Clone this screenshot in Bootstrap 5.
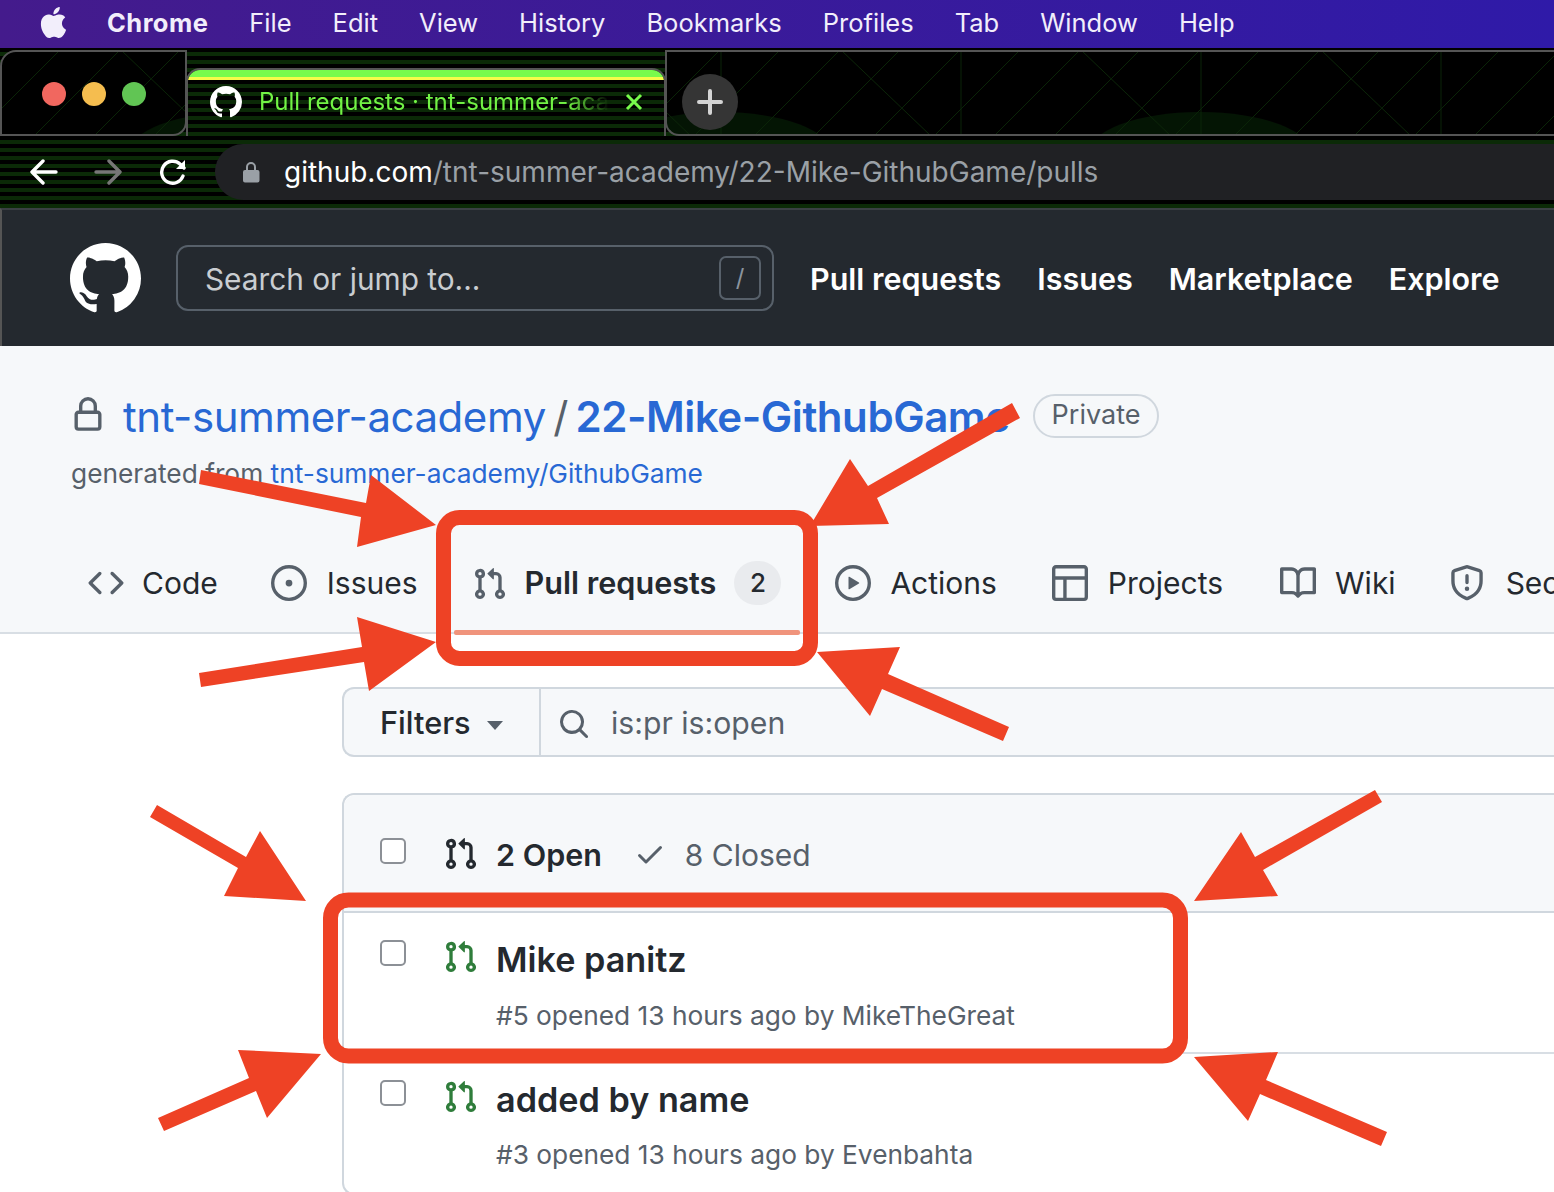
<!DOCTYPE html>
<html lang="en">
<head>
<meta charset="utf-8">
<title>Pull requests</title>
<link href="https://cdn.jsdelivr.net/npm/bootstrap@5.3.0/dist/css/bootstrap.min.css" rel="stylesheet">
<style>
html,body{margin:0;background:#fff}
body{width:1554px;height:1192px;overflow:hidden;position:relative;font-family:Inter,"Liberation Sans",sans-serif;color:#24292f}
a{text-decoration:none}
svg{display:block;flex:none}
.defs-holder{position:absolute}
.mac-strip{height:48px;background:linear-gradient(90deg,#441b8c,#2f1aa8);color:#f2eefb;padding:0 0 3px 38px;font-size:25.5px;line-height:45px;gap:41px}
.mac-strip .apple{width:31px;height:31px;margin-right:-3px;fill:#f2eefb}
.mac-strip b{font-weight:700;letter-spacing:.45px}
.browser{height:160px;background:repeating-linear-gradient(180deg,#000 0 4px,#0b2a07 4px 8px) fixed}
.top-row{height:88px}
.scene{margin-top:2px;height:86px;background-color:#000;background-image:url("data:image/svg+xml,%3Csvg xmlns='http://www.w3.org/2000/svg' width='480' height='86'%3E%3Cellipse cx='240' cy='104' rx='112' ry='42' fill='%23041504'/%3E%3Cellipse cx='720' cy='104' rx='112' ry='42' fill='%23041504'/%3E%3Cg stroke='%230a2407' fill='none'%3E%3Cpath d='M60 0L-26 86M120 0L34 86M180 0L94 86M240 0L154 86M300 0L214 86M360 0L274 86M420 0L334 86M480 0L394 86M540 0L454 86M1 0V86M241 0V86M121 0L211 86M361 0L451 86'/%3E%3C/g%3E%3C/svg%3E");background-origin:border-box;border:solid #555}
.scene-left{width:187px;border-width:2px;border-radius:16px 0 14px 0;flex:none}
.dots{gap:16px;padding:30px 0 0 40px}
.dots span{width:24px;height:24px;border-radius:50%}
.dot-r{background:#f1675f}.dot-y{background:#f5bd4f}.dot-g{background:#61c554}
.page-tab{width:480px;flex:none;margin:20px -1px 0;height:68px;border:2px solid #555;border-bottom:0;border-radius:14px 14px 0 0;overflow:hidden;background:repeating-linear-gradient(180deg,#000 0 4px,#0b2a07 4px 8px) fixed}
.tab-band{height:10px;background:linear-gradient(180deg,#78fb4c 0 7px,#f6fb4a 7px)}
.tab-body{padding:6px 18px 0 22px;color:#72f345;font-size:24px;line-height:32px}
.tab-mark{color:#fff}
.tab-title{width:350px;white-space:nowrap;overflow:hidden;margin-left:17px;-webkit-mask-image:linear-gradient(90deg,#000 88%,transparent);mask-image:linear-gradient(90deg,#000 88%,transparent)}
.tab-x{stroke:#78fb4c;stroke-width:3;margin-left:16px}
.scene-right{flex:1;border-width:2px 0 2px 2px;border-radius:0 0 0 14px;background-position:-665px 0}
.plus-btn{width:56px;height:56px;border-radius:50%;background:#353535;margin:22px 0 0 15px}
.tool-row{height:72px;padding:8px 0 8px 30px}
.nav-ico{stroke-width:3.4;fill:none;stroke-linecap:round;stroke-linejoin:round}
.ico-fwd{margin-left:36px}.ico-rel{margin-left:37px}
.omnibox{height:56px;flex:1;margin-left:28px;background:#202124;border-radius:28px 0 0 28px;padding-left:27px;font-size:28px;color:#9aa0a6}
.omnibox svg{margin-right:24px}
.omnibox b{font-weight:400;color:#fff}
.gh-head{height:138px;background:#24292f;border-left:2px solid #555;border-top:2px solid #3a3f44;padding-left:68px;color:#fff}
.jump{width:598px;height:66px;margin-left:35px;border:2px solid #57606a;border-radius:12px;padding:2px 11px 0 27px;font-size:29.8px;color:#c9cdd1}
.slash{width:42px;height:44px;margin-top:-2px;border:2px solid #57606a;border-radius:7px;font-size:24px;color:#8b949e}
.gh-links{gap:36px;margin-left:36px;padding-top:2px;font-size:30.5px;font-weight:600}
.repo-top{height:288px;background:#f6f8fa;border-bottom:2px solid #d8dee4;overflow:hidden}
.repo-title{padding:43px 0 0 70px;height:98px;font-size:42px;line-height:48px;letter-spacing:-.45px}
.repo-title a{color:#2868d4}
.repo-lock{margin:-4px 17px 0 0}
.sep{color:#57606a;margin:0 7.5px}
.priv{height:44px;border:2px solid #d0d7de;border-radius:22px;padding:0 17px;font-size:27px;letter-spacing:0;color:#57606a;margin:-2px 0 0 23px;line-height:38px}
.from{padding-left:71px;font-size:26.3px;line-height:30px;color:#57606a;margin-top:15px}
.from a{color:#2868d4}
.tabs-line{padding-left:88px;margin-top:72px;font-size:30px;white-space:nowrap;line-height:40px}
.tabs-line .ico{fill:#57606a}
.t-code{gap:18px;margin-right:53px}
.t-issues{gap:20px;margin-right:54px}
.t-pr{margin-left:3px;margin-right:54px;font-size:30.6px}
.t-pr b{font-weight:600;margin-left:20px}
.t-actions{gap:19px;margin-right:55px}
.t-projects{gap:20px;margin-right:57px}
.t-wiki{gap:19px;margin-right:53px}
.t-sec{gap:21px}
.counter{width:47px;height:44px;margin-left:18px;border-radius:22px;background:#e9ebee;font-size:26px;font-weight:500;text-align:center;line-height:44px}
.filter-bar{height:70px;margin:53px 0 0 342px;border:2px solid #d0d7de;border-right:0;border-radius:12px 0 0 12px;background:#f6f8fa}
.filt{width:197px;border-right:2px solid #d0d7de;padding:3px 0 0 36px;font-size:30.7px;font-weight:500}
.caret-mark{width:0;height:0;border:8px solid transparent;border-top:9px solid #57606a;border-bottom:0;margin-left:16px;margin-top:3px}
.q{padding:3px 0 0 17px;gap:21px;font-size:30.2px;color:#57606a}
.pr-list{margin:36px 0 0 342px;border:2px solid #d0d7de;border-right:0;border-radius:12px 0 0 12px;height:402px}
.pr-head{height:118px;background:#f6f8fa;border-bottom:2px solid #d0d7de;border-radius:12px 0 0 0;padding-left:36px;font-size:30.5px}
.head-txt{margin:4px 0 0 20px}
.head-cb{margin-bottom:4px}
.head-pr{margin-left:40px;fill:#24292f}
.head-chk{margin:2px 0 0 32px;fill:#57606a}
.head-closed{margin-left:19px;color:#57606a;font-size:30px}
.cb{width:26px;height:26px;border:2px solid #8c9096;border-radius:5px;background:#fff;flex:none}
.pr-row{padding-left:36px;border-bottom:2px solid #d8dee4;height:141px}
.pr-row .cb{margin-top:27px}
.pr-row .pi{margin:28px 0 0 40px;fill:#2f7d3b}
.pr-body{margin-left:20px}
.pr-body h3{font-size:34.2px;font-weight:600;line-height:40px;margin:27px 0 0}
.pr-body p{font-size:26.3px;line-height:32px;margin:20px 0 0;color:#57606a}
.pr-row.last .cb{margin-top:26px}
.pr-row.last .pi{margin-top:27px}
.pr-row.last h3{margin-top:26px}
.pr-row.last p{margin-top:19px}
.notes{position:absolute;left:0;top:0;pointer-events:none}
</style>
</head>
<body>
<svg class="defs-holder" width="0" height="0">
<defs>
<symbol id="mark" viewBox="0 0 16 16"><path fill="currentColor" d="M8 0C3.58 0 0 3.58 0 8c0 3.54 2.29 6.53 5.47 7.59.4.07.55-.17.55-.38 0-.19-.01-.82-.01-1.49-2.01.37-2.53-.49-2.69-.94-.09-.23-.48-.94-.82-1.13-.28-.15-.68-.52-.01-.53.63-.01 1.08.58 1.23.82.72 1.21 1.87.87 2.33.66.07-.52.28-.87.51-1.07-1.78-.2-3.64-.89-3.64-3.95 0-.87.31-1.59.82-2.15-.08-.2-.36-1.02.08-2.12 0 0 .67-.21 2.2.82.64-.18 1.32-.27 2-.27.68 0 1.36.09 2 .27 1.53-1.04 2.2-.82 2.2-.82.44 1.1.16 1.92.08 2.12.51.56.82 1.27.82 2.15 0 3.07-1.87 3.75-3.65 3.95.29.25.54.73.54 1.48 0 1.07-.01 1.93-.01 2.2 0 .21.15.46.55.38A8.013 8.013 0 0016 8c0-4.42-3.58-8-8-8z"/></symbol>
<symbol id="prq" viewBox="1.5 .6 13.5 14.4" preserveAspectRatio="none"><path d="M1.5 3.25a2.25 2.25 0 1 1 3 2.122v5.256a2.251 2.251 0 1 1-1.5 0V5.372A2.25 2.25 0 0 1 1.5 3.25Zm5.677-.177L9.573.677A.25.25 0 0 1 10 .854V2.5h1A2.5 2.5 0 0 1 13.5 5v5.628a2.251 2.251 0 1 1-1.5 0V5a1 1 0 0 0-1-1h-1v1.646a.25.25 0 0 1-.427.177L7.177 3.427a.25.25 0 0 1 0-.354ZM3.75 2.5a.75.75 0 1 0 0 1.5.75.75 0 0 0 0-1.5Zm0 9.5a.75.75 0 1 0 0 1.5.75.75 0 0 0 0-1.5Zm8.25.75a.75.75 0 1 0 1.5 0 .75.75 0 0 0-1.5 0Z"/></symbol>
</defs>
</svg>

<div class="mac-strip d-flex align-items-center">
  <svg class="apple" viewBox="0 0 16 16"><path d="M11.182.008C11.148-.03 9.923.023 8.857 1.18c-1.066 1.156-.902 2.482-.878 2.516.024.034 1.52.087 2.475-1.258.955-1.345.762-2.391.728-2.43Zm3.314 11.733c-.048-.096-2.325-1.234-2.113-3.422.212-2.189 1.675-2.789 1.698-2.854.023-.065-.597-.79-1.254-1.157a3.692 3.692 0 0 0-1.563-.434c-.108-.003-.483-.095-1.254.116-.508.139-1.653.589-1.968.607-.316.018-1.256-.522-2.267-.665-.647-.125-1.333.131-1.824.328-.49.196-1.422.754-2.074 2.237-.652 1.482-.311 3.83-.067 4.56.244.729.625 1.924 1.273 2.796.576.984 1.34 1.667 1.659 1.899.319.232 1.219.386 1.843.067.502-.308 1.408-.485 1.766-.472.357.013 1.061.154 1.782.539.571.197 1.111.115 1.652-.105.541-.221 1.324-1.059 2.238-2.758.347-.79.505-1.217.473-1.282Z"/></svg>
  <b>Chrome</b><span>File</span><span>Edit</span><span>View</span><span>History</span><span>Bookmarks</span><span>Profiles</span><span>Tab</span><span>Window</span><span>Help</span>
</div>

<div class="browser">
  <div class="top-row d-flex">
    <div class="scene scene-left dots d-flex">
      <span class="dot-r"></span><span class="dot-y"></span><span class="dot-g"></span>
    </div>
    <div class="page-tab">
      <div class="tab-band"></div>
      <div class="tab-body d-flex align-items-center">
        <svg class="tab-mark" width="32" height="32"><use href="#mark"/></svg>
        <div class="tab-title">Pull requests · tnt-summer-academy/22-Mike</div>
        <svg class="tab-x" width="18" height="18" viewBox="0 0 18 18"><path d="M2 2L16 16M16 2L2 16"/></svg>
      </div>
    </div>
    <div class="scene scene-right">
      <div class="plus-btn d-flex align-items-center justify-content-center">
        <svg width="26" height="26" viewBox="0 0 26 26"><path d="M13 2V24M2 13H24" stroke="#d4d4d4" stroke-width="4" stroke-linecap="round"/></svg>
      </div>
    </div>
  </div>
  <div class="tool-row d-flex align-items-center">
    <svg class="nav-ico" width="28" height="26" viewBox="0 0 28 26" stroke="#fff"><path d="M26 13H3M13 2L2 13L13 24"/></svg>
    <svg class="nav-ico ico-fwd" width="28" height="26" viewBox="0 0 28 26" stroke="#777"><path d="M2 13H25M15 2L26 13L15 24"/></svg>
    <svg class="nav-ico ico-rel" width="28" height="28" viewBox="0 0 28 28" stroke="#fff"><path d="M24 18A11 11 0 1 1 21 6L25 10"/><path d="M26 2V11H17Z" fill="#fff" stroke="none"/></svg>
    <div class="omnibox d-flex align-items-center">
      <svg width="18" height="22" viewBox="0 0 18 22"><path fill="#9aa0a6" d="M4 9V6a5 5 0 0 1 10 0v3h1.500a2 2 0 0 1 2 2v8.500a2 2 0 0 1-2 2h-12.500a2 2 0 0 1-2-2V11a2 2 0 0 1 2-2zm2 0h6V6a3 3 0 0 0-6 0z"/></svg>
      <span><b>github.com</b>/tnt-summer-academy/22-Mike-GithubGame/pulls</span>
    </div>
  </div>
</div>

<div class="gh-head d-flex align-items-center">
  <svg width="71" height="71"><use href="#mark"/></svg>
  <div class="jump d-flex align-items-center justify-content-between">
    <span>Search or jump to...</span>
    <span class="slash d-flex align-items-center justify-content-center">/</span>
  </div>
  <div class="gh-links d-flex"><span>Pull requests</span><span>Issues</span><span>Marketplace</span><span>Explore</span></div>
</div>

<div class="repo-top">
  <div class="repo-title d-flex align-items-center">
    <svg class="repo-lock" width="36" height="36" viewBox="0 0 16 16" fill="#57606a"><path d="M4 4a4 4 0 0 1 8 0v2h.25c.966 0 1.750.784 1.750 1.750v5.500A1.750 1.750 0 0 1 12.250 15h-8.500A1.750 1.750 0 0 1 2 13.250v-5.500C2 6.784 2.784 6 3.750 6H4Zm8.250 3.500h-8.500a.25.25 0 0 0-.25.25v5.500c0 .138.112.25.25.25h8.500a.25.25 0 0 0 .25-.25v-5.500a.25.25 0 0 0-.25-.25ZM10.500 6V4a2.500 2.500 0 1 0-5 0v2Z"/></svg>
    <a href="#">tnt-summer-academy</a><span class="sep">/</span><a href="#" class="fw-semibold">22-Mike-GithubGame</a>
    <span class="priv">Private</span>
  </div>
  <div class="from">generated from <a href="#">tnt-summer-academy/GithubGame</a></div>
  <div class="tabs-line d-flex align-items-center">
    <div class="t-code d-flex align-items-center"><svg class="ico" width="36" height="36" viewBox="0 0 16 16"><path d="m11.28 3.22 4.25 4.25a.75.75 0 0 1 0 1.06l-4.25 4.25a.749.749 0 0 1-1.275-.326.749.749 0 0 1 .215-.734L13.94 8l-3.72-3.72a.749.749 0 0 1 .326-1.275.749.749 0 0 1 .734.215Zm-6.56 0a.751.751 0 0 1 1.042.018.751.751 0 0 1 .018 1.042L2.06 8l3.72 3.72a.749.749 0 0 1-.326 1.275.749.749 0 0 1-.734-.215L.47 8.53a.75.75 0 0 1 0-1.06Z"/></svg>Code</div>
    <div class="t-issues d-flex align-items-center"><svg class="ico" width="36" height="36" viewBox="0 0 16 16"><path d="M8 9.500a1.500 1.500 0 1 0 0-3 1.500 1.500 0 0 0 0 3Z"/><path d="M8 0a8 8 0 1 1 0 16A8 8 0 0 1 8 0ZM1.500 8a6.500 6.500 0 1 0 13 0 6.500 6.500 0 0 0-13 0Z"/></svg>Issues</div>
    <div class="t-pr d-flex align-items-center"><svg class="ico" width="30" height="31"><use href="#prq"/></svg><b>Pull requests</b><span class="counter">2</span></div>
    <div class="t-actions d-flex align-items-center"><svg class="ico" width="36" height="36" viewBox="0 0 16 16"><path d="M8 0a8 8 0 1 1 0 16A8 8 0 0 1 8 0ZM1.500 8a6.500 6.500 0 1 0 13 0 6.500 6.500 0 0 0-13 0Zm4.879-2.773 4.264 2.559a.25.25 0 0 1 0 .428l-4.264 2.559A.25.25 0 0 1 6 10.559V5.442a.25.25 0 0 1 .379-.215Z"/></svg>Actions</div>
    <div class="t-projects d-flex align-items-center"><svg class="ico" width="36" height="36" viewBox="0 0 16 16"><path d="M0 1.750C0 .784.784 0 1.750 0h12.500C15.216 0 16 .784 16 1.750v12.500A1.750 1.750 0 0 1 14.250 16H1.750A1.750 1.750 0 0 1 0 14.250ZM6.500 6.500v8h7.750a.25.25 0 0 0 .25-.25V6.500Zm8-1.500V1.750a.25.25 0 0 0-.25-.25H1.750a.25.25 0 0 0-.25.25V5Zm-13 1.500v7.750c0 .138.112.25.25.25H5v-8Z"/></svg>Projects</div>
    <div class="t-wiki d-flex align-items-center"><svg class="ico" width="36" height="36" viewBox="0 0 16 16"><path d="M0 1.750A.75.75 0 0 1 .75 1h4.253c1.227 0 2.317.59 3 1.501A3.743 3.743 0 0 1 11.006 1h4.245a.75.75 0 0 1 .75.75v10.500a.75.75 0 0 1-.75.75h-4.507a2.250 2.250 0 0 0-1.591.659l-.622.621a.75.75 0 0 1-1.060 0l-.622-.621A2.250 2.250 0 0 0 5.258 13H.75a.75.75 0 0 1-.75-.75Zm7.251 10.324.004-5.073-.002-2.253A2.250 2.250 0 0 0 5.003 2.500H1.500v9h3.757a3.750 3.750 0 0 1 1.994.574ZM8.755 4.750l-.004 7.322a3.752 3.752 0 0 1 1.992-.572H14.500v-9h-3.495a2.250 2.250 0 0 0-2.250 2.250Z"/></svg>Wiki</div>
    <div class="t-sec d-flex align-items-center"><svg class="ico" width="36" height="36" viewBox="0 0 16 16"><path d="M7.467.133a1.748 1.748 0 0 1 1.066 0l5.250 1.680A1.750 1.750 0 0 1 15 3.480V7c0 1.566-.32 3.182-1.303 4.682-.983 1.498-2.585 2.813-5.032 3.855a1.697 1.697 0 0 1-1.330 0c-2.447-1.042-4.049-2.357-5.032-3.855C1.320 10.182 1 8.566 1 7V3.480a1.750 1.750 0 0 1 1.217-1.667Zm.61 1.429a.25.25 0 0 0-.153 0l-5.250 1.680a.25.25 0 0 0-.174.238V7c0 1.358.275 2.666 1.057 3.860.784 1.194 2.121 2.340 4.366 3.297a.196.196 0 0 0 .154 0c2.245-.956 3.582-2.104 4.366-3.298C13.225 9.666 13.500 8.360 13.500 7V3.480a.251.251 0 0 0-.174-.237l-5.250-1.680ZM8.750 4.750v3a.75.75 0 0 1-1.500 0v-3a.75.75 0 0 1 1.500 0ZM9 10.500a1 1 0 1 1-2 0 1 1 0 0 1 2 0Z"/></svg>Security</div>
  </div>
</div>

<div class="filter-bar d-flex">
  <div class="filt d-flex align-items-center">Filters<span class="caret-mark"></span></div>
  <div class="q d-flex align-items-center">
    <svg width="32" height="32" viewBox="0 0 16 16" fill="#57606a"><path d="M10.680 11.740a6 6 0 0 1-7.922-8.982 6 6 0 0 1 8.982 7.922l3.040 3.040a.749.749 0 0 1-.326 1.275.749.749 0 0 1-.734-.215ZM11.500 7a4.499 4.499 0 1 0-8.997 0A4.499 4.499 0 0 0 11.500 7Z"/></svg>
    <span>is:pr is:open</span>
  </div>
</div>

<div class="pr-list">
  <div class="pr-head d-flex align-items-center">
    <span class="cb head-cb"></span>
    <svg class="head-pr" width="30" height="31"><use href="#prq"/></svg>
    <span class="fw-semibold head-txt">2 Open</span>
    <svg class="head-chk" width="32" height="32" viewBox="0 0 16 16"><path d="M13.780 4.220a.75.75 0 0 1 0 1.060l-7.250 7.250a.75.75 0 0 1-1.060 0L2.220 9.280a.751.751 0 0 1 .018-1.042.751.751 0 0 1 1.042-.018L6 10.940l6.720-6.720a.75.75 0 0 1 1.060 0Z"/></svg>
    <span class="head-txt head-closed">8 Closed</span>
  </div>
  <div class="pr-row d-flex">
    <span class="cb"></span>
    <svg class="pi" width="30" height="31"><use href="#prq"/></svg>
    <div class="pr-body"><h3>Mike panitz</h3><p>#5 opened 13 hours ago by MikeTheGreat</p></div>
  </div>
  <div class="pr-row last d-flex border-0">
    <span class="cb"></span>
    <svg class="pi" width="30" height="31"><use href="#prq"/></svg>
    <div class="pr-body"><h3>added by name</h3><p>#3 opened 13 hours ago by Evenbahta</p></div>
  </div>
</div>

<svg class="notes" width="1554" height="1192" viewBox="0 0 1554 1192" fill="#ee4225">
  <polygon points="201,470 199,484 361,517 357,547 436,525 371,475 366,503"/>
  <polygon points="199,673 201,687 364,662 369,691 436,642 357,617 362,647"/>
  <polygon points="1012,403 1020,418 877,498 889,524 810,526 850,459 868,486"/>
  <polygon points="1009,727 1003,741 882,689 870,716 817,652 900,647 888,674"/>
  <polygon points="157,805 150,817 238,868 224,896 306,901 260,831 246,857"/>
  <polygon points="158,1118 164,1131 256,1091 267,1118 321,1054 238,1050 249,1078"/>
  <polygon points="1375,790 1382,802 1263,870 1278,896 1194,901 1241,832 1255,857"/>
  <polygon points="1387,1132 1381,1146 1260,1094 1248,1121 1194,1057 1278,1052 1266,1080"/>
  <rect x="443.500" y="517.500" width="367" height="141" rx="16" fill="none" stroke="#ee4225" stroke-width="15"/>
  <rect x="330.500" y="900" width="850" height="156" rx="18" fill="none" stroke="#ee4225" stroke-width="15"/>
  <rect x="454" y="630" width="346" height="5" rx="2" fill="#f0947c"/>
</svg>
</body>
</html>
